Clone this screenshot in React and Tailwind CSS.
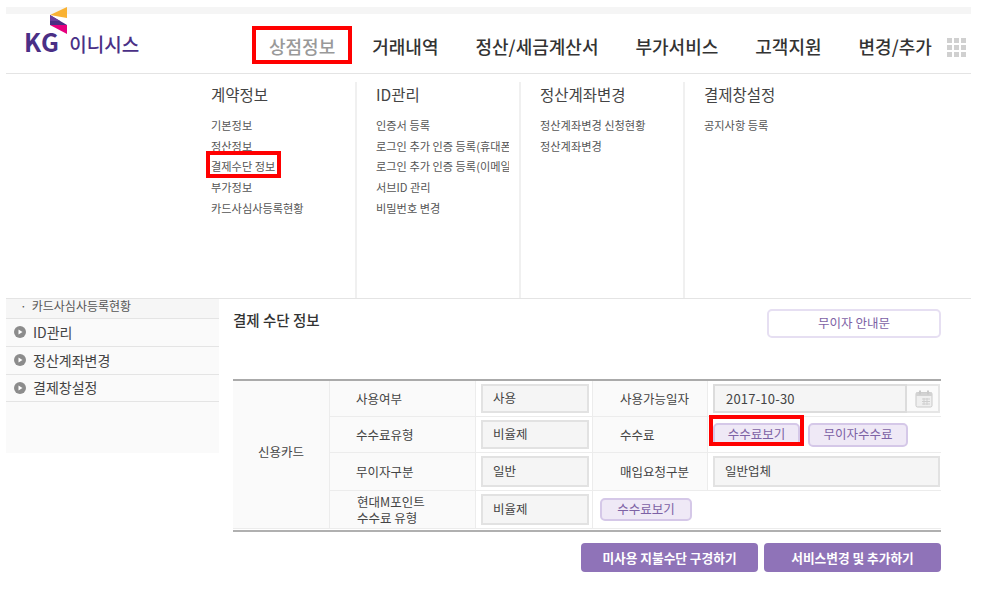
const font = { fontFamily: '"Noto Sans CJK KR", "Noto Sans", sans-serif' };

const navItems = [
  { label: '상점정보', color: 'text-[#999999]' },
  { label: '거래내역', color: 'text-[#333333]' },
  { label: '정산/세금계산서', color: 'text-[#333333]' },
  { label: '부가서비스', color: 'text-[#333333]' },
  { label: '고객지원', color: 'text-[#333333]' },
  { label: '변경/추가', color: 'text-[#333333]' },
];

const menuColumns = [
  { title: '계약정보', items: ['기본정보', '정산정보', '결제수단 정보', '부가정보', '카드사심사등록현황'] },
  { title: 'ID관리', items: ['인증서 등록', '로그인 추가 인증 등록(휴대폰)', '로그인 추가 인증 등록(이메일)', '서브ID 관리', '비밀번호 변경'] },
  { title: '정산계좌변경', items: ['정산계좌변경 신청현황', '정산계좌변경'] },
  { title: '결제창설정', items: ['공지사항 등록'] },
];

function Logo() {
  return (
    <div className="relative w-[140px] h-[59px] ml-[18px] shrink-0">
      <svg className="absolute left-[25px] top-[-8px]" width="20" height="30" viewBox="0 0 20 30">
        <polygon points="1,9 18,1 18,12" fill="#f9b233" />
        <polygon points="1,9 18,19 1,19" fill="#4b2e83" />
        <polygon points="1,9 11,15 1,15" fill="#6a3d9a" />
        <polygon points="1,19 18,19 18,28" fill="#e6007e" />
      </svg>
      <div className="absolute left-0 top-[14px] flex items-baseline text-[#4a2f86]">
        <span className="text-[25px] leading-[26px] font-bold tracking-[0.5px]">KG</span>
        <span className="ml-[10px] text-[19px] leading-[26px] font-medium">이니시스</span>
      </div>
    </div>
  );
}

function Header() {
  return (
    <div className="flex items-start h-[60px] border-b border-[#e4e4e4]">
      <Logo />
      <nav className="flex items-center gap-[37px] h-[59px] pt-[6px] ml-[105px]">
        {navItems.map((item) => (
          <div key={item.label} className={`${item.color} text-[18px] font-medium whitespace-nowrap`}>
            {item.label}
          </div>
        ))}
      </nav>
      <div className="grid grid-cols-3 gap-[2px] ml-[15px] mt-[24px]">
        {Array.from({ length: 9 }).map((_, i) => (
          <span key={i} className="w-[5px] h-[5px] bg-[#d0d0d0]" />
        ))}
      </div>
    </div>
  );
}

function MegaMenu() {
  return (
    <div className="flex h-[225px] pt-[8px] pl-[187px] border-b border-[#e4e4e4]">
      {menuColumns.map((col, i) => (
        <div key={col.title} className={`w-[164px] ${i === 0 ? 'pl-[18px]' : 'pl-[19px]'} pr-[10px] overflow-hidden ${i < 3 ? 'border-r-2 border-[#f0f0f0]' : ''}`}>
          <div className="text-[15.5px] leading-[24px] text-[#444444]">{col.title}</div>
          <ul className="mt-[9px]">
            {col.items.map((item) => (
              <li key={item} className="text-[11.2px] leading-[20.7px] text-[#555555] whitespace-nowrap overflow-hidden">{item}</li>
            ))}
          </ul>
        </div>
      ))}
    </div>
  );
}

function PlayDot() {
  return (
    <svg width="12" height="12" viewBox="0 0 12 12" className="shrink-0">
      <circle cx="6" cy="6" r="6" fill="#8c8c8c" />
      <polygon points="4.5,3.5 8.5,6 4.5,8.5" fill="#ffffff" />
    </svg>
  );
}

function Sidebar() {
  return (
    <aside className="w-[213px] h-[154px] bg-[#fafafa] shrink-0">
      <div className="h-[20px] flex items-start pl-[14px] bg-[#f6f6f6] border-b border-[#e4e4e4] text-[12px] leading-[13px] text-[#555555] overflow-hidden">
        <span className="mr-[5px]">·</span>카드사심사등록현황
      </div>
      {['ID관리', '정산계좌변경', '결제창설정'].map((label) => (
        <div key={label} className="h-[28px] last:h-[27px] flex items-center gap-[7px] pl-[8px] pb-[1px] border-b border-[#e4e4e4] text-[14px] text-[#444444]">
          <PlayDot />
          {label}
        </div>
      ))}
    </aside>
  );
}

function Label({ className, children }) {
  return <div className={`flex items-center bg-[#fafafa] border-r border-b border-[#ececec] text-[12.5px] leading-[16px] text-[#444444] ${className}`}>{children}</div>;
}

function Value({ className = 'pl-[5px] pr-[3px] border-r', children }) {
  return (
    <div className={`flex items-center py-[3px] border-b border-[#ececec] ${className}`}>
      <div className="w-full h-full flex items-center pl-[10px] bg-[#f5f5f5] border-2 border-[#e2e2e2] text-[12.5px] text-[#444444]">{children}</div>
    </div>
  );
}

function SoftButton({ className, children }) {
  return (
    <button className={`flex items-center justify-center bg-[#efe9f6] border-2 border-[#d5c8e8] rounded-[5px] text-[12.5px] text-[#7d62a5] ${className}`}>
      {children}
    </button>
  );
}

function CalendarIcon() {
  return (
    <svg width="18" height="18" viewBox="0 0 18 18">
      <rect x="1" y="2.5" width="16" height="14.5" rx="1.5" fill="#efefef" stroke="#c9c9c9" />
      <rect x="1" y="2.5" width="16" height="3.5" fill="#d2d2d2" />
      <rect x="4" y="0.5" width="2" height="4" fill="#c9c9c9" />
      <rect x="12" y="0.5" width="2" height="4" fill="#c9c9c9" />
      <path d="M7 9h8M7 11.5h8M7 14h8M9 8v7M12 8v7" stroke="#cfcfcf" strokeWidth="1" fill="none" />
    </svg>
  );
}

function FeeTable() {
  return (
    <div className="mt-[41px] grid grid-cols-[97px_146px_117px_115px_233px] grid-rows-[36px_36px_38px_38px] border-t-2 border-[#aaaaaa]">
      <div className="row-span-4 flex items-center justify-center pb-[4px] bg-[#fafafa] border-r border-b border-[#ececec] text-[12.5px] text-[#444444]">신용카드</div>

      <Label className="pl-[26px]">사용여부</Label>
      <Value>사용</Value>
      <Label className="pl-[27px]">사용가능일자</Label>
      <div className="flex items-center pl-[5px] pr-[1px] py-[3px] border-b border-[#ececec]">
        <div className="h-full flex-1 flex items-center pl-[11px] bg-[#f5f5f5] border-2 border-[#dcdcdc] text-[13px] tracking-[0.2px] text-[#444444]">2017-10-30</div>
        <div className="w-[33px] h-full flex items-center justify-center pl-[2px] bg-[#fafafa] border-y-2 border-r-2 border-[#e6e6e6]"><CalendarIcon /></div>
      </div>

      <Label className="pl-[26px]">수수료유형</Label>
      <Value>비율제</Value>
      <Label className="pl-[27px]">수수료</Label>
      <div className="flex items-center gap-[8px] pl-[5px] border-b border-[#ececec]">
        <SoftButton className="w-[87px] h-[23px]">수수료보기</SoftButton>
        <SoftButton className="w-[100px] h-[24px]">무이자수수료</SoftButton>
      </div>

      <Label className="pl-[26px]">무이자구분</Label>
      <Value>일반</Value>
      <Label className="pl-[27px]">매입요청구분</Label>
      <Value className="pl-[5px] pr-[1px]">일반업체</Value>

      <Label className="pl-[27px]"><span>현대M포인트<br />수수료 유형</span></Label>
      <Value>비율제</Value>
      <div className="col-span-2 flex items-center pl-[7px] border-b border-[#ececec]">
        <SoftButton className="w-[92px] h-[23px]">수수료보기</SoftButton>
      </div>
    </div>
  );
}

function Main() {
  return (
    <main className="w-[708px] ml-[14px]">
      <div className="flex items-start justify-between pt-[10px]">
        <h2 className="text-[14.5px] leading-[22px] font-medium text-[#333333]">결제 수단 정보</h2>
        <button className="w-[174px] h-[29px] bg-white border-2 border-[#e6dff2] rounded-[5px] text-[12.5px] text-[#7d62a5]">무이자 안내문</button>
      </div>
      <FeeTable />
      <div className="h-[2px] mt-[1px] bg-[#b0b0b0]" />
      <div className="flex justify-end gap-[6px] mt-[11px]">
        <button className="w-[177px] h-[29px] bg-[#8f73b8] rounded-[4px] text-[12.7px] font-bold text-white">미사용 지불수단 구경하기</button>
        <button className="w-[177px] h-[29px] bg-[#8f73b8] rounded-[4px] text-[12.7px] font-bold text-white">서비스변경 및 추가하기</button>
      </div>
    </main>
  );
}

export default function App() {
  return (
    <div className="relative w-[981px] h-[589px] bg-white overflow-hidden pt-[7px] pl-[6px]" style={font}>
      <div className="w-[965px]">
        <div className="h-[7px] bg-[#f5f5f5]" />
        <Header />
        <MegaMenu />
        <div className="flex">
          <Sidebar />
          <Main />
        </div>
      </div>
      {/* red annotation boxes drawn over the screenshot */}
      <div className="absolute left-[252px] top-[26px] w-[100px] h-[38px] border-4 border-[#ff0000]" />
      <div className="absolute left-[206px] top-[151px] w-[75px] h-[27px] border-4 border-[#ff0000]" />
      <div className="absolute left-[709px] top-[415px] w-[95px] h-[31px] border-4 border-[#ff0000]" />
    </div>
  );
}
